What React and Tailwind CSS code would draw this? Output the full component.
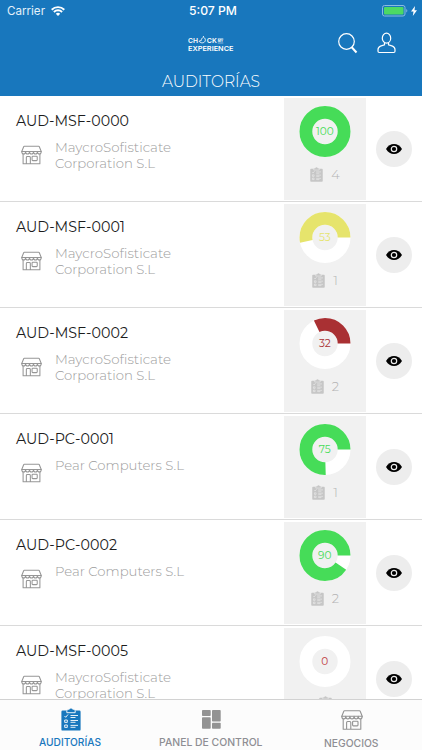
import React from "react";

const font = "font-['Montserrat','Inter',sans-serif]";

const audits = [
  { code: "AUD-MSF-0000", codeW: 113, lines: [["MaycroSofisticate", 116], ["Corporation S.L", 100]], score: 100, color: "#46dc58", count: 4 },
  { code: "AUD-MSF-0001", codeW: 109, lines: [["MaycroSofisticate", 116], ["Corporation S.L", 100]], score: 53, color: "#e6e46c", count: 1 },
  { code: "AUD-MSF-0002", codeW: 112, lines: [["MaycroSofisticate", 116], ["Corporation S.L", 100]], score: 32, color: "#a93033", count: 2 },
  { code: "AUD-PC-0001", codeW: 98, lines: [["Pear Computers S.L", 129]], score: 75, color: "#46dc58", count: 1 },
  { code: "AUD-PC-0002", codeW: 101, lines: [["Pear Computers S.L", 129]], score: 90, color: "#46dc58", count: 2 },
  { code: "AUD-MSF-0005", codeW: 112, lines: [["MaycroSofisticate", 116], ["Corporation S.L", 100]], score: 0, color: "#c0393c", count: null },
];

// Text fitted to a fixed advance width.
function Fit({ text, width, height, baseline, className, x = 0 }) {
  return (
    <svg width={width + x + 2} height={height} className="block overflow-visible">
      <text x={x} y={baseline} textLength={width} lengthAdjust="spacingAndGlyphs" className={className}>
        {text}
      </text>
    </svg>
  );
}

function Store({ className }) {
  return (
    <svg viewBox="0 0 22 20" className={className} fill="none" stroke="currentColor" strokeWidth="1.100" strokeLinejoin="round" strokeLinecap="round">
      <path d="M3.500.8h15Q19 .8 19.200 1.300L21.200 6.300H.8l2-5Q3 .8 3.500.8z" />
      <path d="M.8 6.300c0 3.600 4 3.600 4 0 0 3.600 4.100 3.600 4.100 0 0 3.600 4.200 3.600 4.200 0 0 3.600 4.100 3.600 4.100 0 0 3.600 4 3.600 4 0" />
      <path d="M2.200 9v10.200h17.600V9M5.600 19v-6.500q0-1 1-1h2.200q1 0 1 1V19" />
      <rect x="11.600" y="11.300" width="5.400" height="4.600" rx=".8" />
    </svg>
  );
}

function Clipboard({ className, lines }) {
  return (
    <svg viewBox="0 0 20 23" className={className}>
      <path fill="currentColor" d="M1.600 2.500h5V1.800h1.600a1.900 1.900 0 0 1 3.600 0h1.600v.7h5A1.200 1.200 0 0 1 19.600 3.700v17.700a1.200 1.200 0 0 1-1.200 1.200H1.600A1.200 1.200 0 0 1 .4 21.400V3.700A1.200 1.200 0 0 1 1.600 2.500z" />
      <g fill="none" stroke={lines} strokeWidth=".9">
        <path d="M5.800 2.500v2.200h8.400V2.500" />
        <path d="M3.500 8l1.200 1.300L7 6.500M9.500 7.500H17M9.500 9.500h5M3.700 12h2.600v2.400H3.700zM9.500 12.500H17M9.500 14.300h5M3.700 17h2.600v2.400H3.700zM9.500 17.400H17M9.500 19.300h5" />
      </g>
    </svg>
  );
}

function Donut({ score, color }) {
  const r = 19.1;
  const c = 2 * Math.PI * r;
  return (
    <svg viewBox="0 0 52 52" className="block h-[52px] w-[52px]">
      <circle cx="26" cy="25.500" r={r} fill="none" stroke="#fff" strokeWidth="12.800" />
      {score > 0 && (
        <circle cx="26" cy="25.500" r={r} fill="none" stroke={color} strokeWidth="12.800" strokeDasharray={`${(c * score) / 100} ${c}`} transform="translate(0 51) scale(1 -1)" />
      )}
      <text x="25.800" y="29.300" textAnchor="middle" fill={color} className={`${font} text-[10.500px] font-normal`}>
        {score}
      </text>
    </svg>
  );
}

function Eye() {
  return (
    <svg viewBox="0 0 16 10" className="h-[10px] w-[16px]">
      <path d="M0 5C2 1.800 4.800 0 8 0s6 1.800 8 5c-2 3.200-4.800 5-8 5S2 8.200 0 5z" />
      <circle cx="8" cy="5" r="2.700" fill="none" stroke="#ececec" strokeWidth="1.200" />
    </svg>
  );
}

function Row({ audit }) {
  return (
    <li className="flex h-[106px] shrink-0 border-b border-[#dadada]">
      <div className="w-[284px] pt-[15px] pl-[15.500px]">
        <Fit text={audit.code} width={audit.codeW} height={20} baseline={14.5} className={`${font} fill-[#1c1c1c] text-[14.500px]`} />
        <div className="flex pt-[9px] pl-[5.500px]">
          <Store className="mt-[5px] h-[20px] w-[21px] text-[#969696]" />
          <div className="pl-[12.500px]">
            {audit.lines.map(([text, width]) => (
              <Fit key={text} text={text} width={width} height={16} baseline={12} className={`${font} fill-[#9c9c9c] text-[13.500px] font-light`} />
            ))}
          </div>
        </div>
      </div>
      <div className="mt-[2px] flex h-[102px] w-[82px] flex-col items-center bg-[#f1f1f1] pt-[8px]">
        <Donut score={audit.score} color={audit.color} />
        <div className="mt-[8px] flex items-center gap-[8px] text-[#c6c6c6]">
          <Clipboard className="h-[15px] w-[13px]" lines="#efefef" />
          {audit.count !== null && <span className={`${font} text-[13px] leading-[16px] font-light text-[#b4b4b4]`}>{audit.count}</span>}
        </div>
      </div>
      <div className="mt-[34.500px] ml-[9.500px] flex h-[36px] w-[36px] items-center justify-center rounded-full bg-[#ededed]">
        <Eye />
      </div>
    </li>
  );
}

export default function App() {
  return (
    <div className="flex h-[750px] w-[422px] flex-col overflow-hidden bg-white">
      <header className="flex h-[96px] shrink-0 flex-col bg-[#1877bd] text-white">
        <div className="flex h-[22px] items-center pr-[5px] pl-[7px] font-['Inter',sans-serif]">
          <div className="flex w-[182px] items-center gap-[6px]">
            <Fit text="Carrier" width={38} height={22} baseline={15} className="fill-[#e4f1fa] text-[12px]" />
            <svg viewBox="0 0 14 10" className="-ml-[2px] h-[10px] w-[14px]" fill="none" stroke="white" strokeWidth="1.900">
              <path d="M.7 3.700a9 9 0 0 1 12.600 0M2.900 6a5.800 5.800 0 0 1 8.200 0" />
              <path d="M7 10 4.800 7.800a3.200 3.200 0 0 1 4.400 0z" fill="white" stroke="none" />
            </svg>
          </div>
          <Fit text="5:07 PM" width={48} height={22} baseline={15} className="fill-white text-[12px] font-medium" />
          <div className="ml-auto flex items-center gap-[3px]">
            <svg viewBox="0 0 26 12" className="h-[12px] w-[26px]">
              <rect x=".5" y=".5" width="22.500" height="10.500" rx="2" fill="none" stroke="#8abbe0" />
              <rect x="2" y="2" width="19.500" height="7.500" rx="1" fill="#4cd964" />
              <path d="M24.300 4v3.500q1-.5 1-1.750T24.300 4" fill="#8abbe0" />
            </svg>
            <svg viewBox="0 0 6 10" className="h-[10px] w-[6px]"><path fill="white" d="M4 0 0 5.500h2.500L1.800 10 6 4.300H3.500z" /></svg>
          </div>
        </div>
        <div className="flex h-[46px] pt-[10px] pl-[188px]">
          <svg viewBox="0 0 46 20" className="mt-[3px] h-[20px] w-[46px]" fill="white">
            <g className="font-['Inter',sans-serif] text-[6.500px] font-semibold">
              <text x="0" y="8" textLength="10" lengthAdjust="spacingAndGlyphs">CH</text>
              <text x="18.800" y="8" textLength="10" lengthAdjust="spacingAndGlyphs">CK</text>
              <text x="0" y="15.500" textLength="45.500" lengthAdjust="spacingAndGlyphs">EXPERIENCE</text>
            </g>
            <text x="29.800" y="6.900" textLength="5.500" lengthAdjust="spacingAndGlyphs" className="font-['Inter',sans-serif] text-[3.600px] font-bold">MY</text>
            <path d="M29.800 3.600h5.500M29.800 8h5.500" stroke="white" strokeWidth=".5" />
            <path d="M11 6.200c1.300 2.300 5.800 2.200 6.300-.7.200-1.500-.5-2.500-1.700-3.200l-.3-1.300M11 6.200l2.200-.6c0-1.500.8-2.600 2.100-3.200" fill="none" stroke="white" strokeWidth=".9" />
          </svg>
          <svg viewBox="0 0 20 22" className="ml-[104px] h-[22px] w-[20px]" fill="none" stroke="white">
            <circle cx="8.500" cy="9.500" r="7.800" strokeWidth="1.200" />
            <path d="m13.500 15 5 5.500" strokeWidth="2" />
          </svg>
          <svg viewBox="0 0 20 22" className="ml-[19px] h-[22px] w-[20px]" fill="none" stroke="white" strokeWidth="1.200">
            <ellipse cx="9.500" cy="6.200" rx="4.200" ry="5" />
            <path d="M7.500 10.800v2l-4 1.300Q1 15.100 1 17.800v1.500q0 1.200 1.200 1.200h14.600q1.200 0 1.200-1.200v-1.500q0-2.700-2.500-3.700l-4-1.300v-2" />
          </svg>
        </div>
        <h1 className="pl-[162px]">
          <Fit text="AUDITORÍAS" width={98} height={24} baseline={18.700} className={`${font} fill-white text-[16.500px] font-light`} />
        </h1>
      </header>
      <ul className="flex h-[603px] shrink-0 flex-col overflow-hidden">
        {audits.map((a) => <Row key={a.code} audit={a} />)}
      </ul>
      <nav className="flex h-[51px] shrink-0 border-t border-[#d2d2d2] bg-[#fcfcfc] text-[#939393]">
        <div className="flex w-[141px] flex-col items-center pt-[8px] text-[#1877bd]">
          <Clipboard className="h-[23px] w-[20px]" lines="#fff" />
          <Fit text="AUDITORÍAS" width={62} height={16} baseline={15} className="fill-[#1877bd] font-['Inter',sans-serif] text-[10.500px] font-medium" />
        </div>
        <div className="flex w-[141px] flex-col items-center pt-[10px]">
          <svg viewBox="0 0 19 19" className="-ml-[1px] h-[19px] w-[19px]" fill="currentColor">
            <rect width="8.700" height="6" rx=".8" /><rect y="7.200" width="8.700" height="11.500" rx=".8" /><rect x="10" width="8.700" height="11.500" rx=".8" /><rect x="10" y="12.700" width="8.700" height="6" rx=".8" />
          </svg>
          <Fit text="PANEL DE CONTROL" width={103.5} height={18} baseline={17} className="fill-[#8e8e93] font-['Inter',sans-serif] text-[10.500px] font-medium" />
        </div>
        <div className="flex w-[140px] flex-col items-center pt-[9.500px]">
          <Store className="h-[20px] w-[22px]" />
          <Fit text="NEGOCIOS" width={54.5} height={18} baseline={16.500} className="fill-[#8e8e93] font-['Inter',sans-serif] text-[10.500px] font-medium" />
        </div>
      </nav>
    </div>
  );
}
